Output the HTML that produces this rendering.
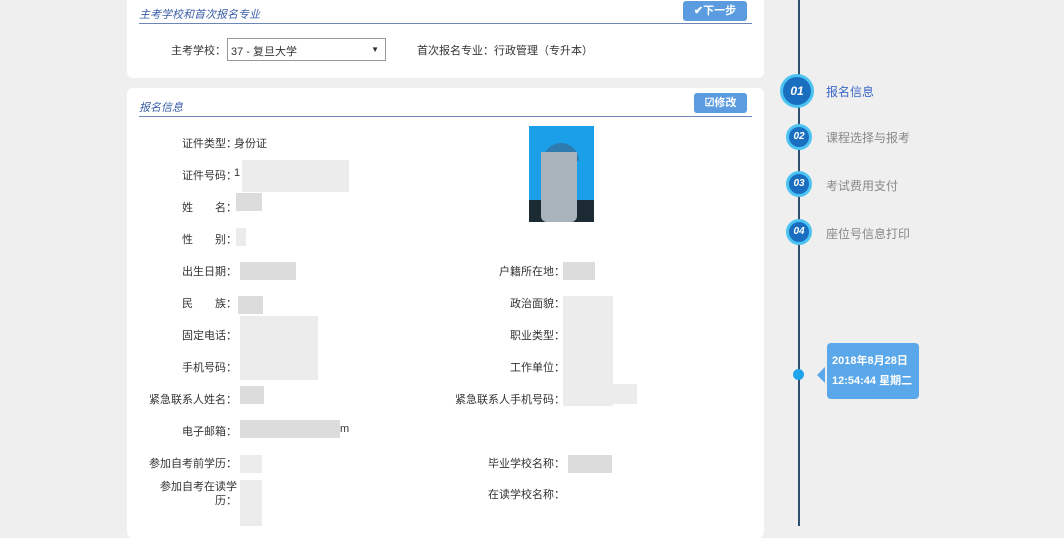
<!DOCTYPE html>
<html><head><meta charset="utf-8"><style>
*{margin:0;padding:0;box-sizing:border-box}
body{width:1064px;height:526px;overflow:hidden;background:#efefef;font-family:"Liberation Sans","Noto Sans CJK SC",sans-serif;font-size:11px;color:#333;position:relative}
.card{position:absolute;left:127px;width:637px;background:#fff;border-radius:6px}
.ttl{position:absolute;left:12px;font-size:11px;font-style:italic;color:#3a5ea8;letter-spacing:0}
.hr{position:absolute;left:12px;right:12px;height:2px;background:#6d86b8}
.btn{position:absolute;background:#5b9be0;color:#fff;font-size:11px;border-radius:3px;text-align:center;font-weight:bold}
.a{position:absolute;white-space:nowrap}
.l{position:absolute;text-align:right;white-space:nowrap}
.b{position:absolute;background:#dcdcdc}
.c{position:absolute;background:#ececec}
.step{position:absolute;left:786px;width:26px;height:26px;border-radius:50%;background:#1a6ec0;border:3px solid #4cc3f0;color:#fff;font-size:10px;font-style:italic;font-weight:bold;text-align:center;line-height:20px}
.st{position:absolute;left:826px;font-size:12px;color:#888}
.L1{left:137px;width:100px}
.L2{left:437px;width:128px}
</style></head><body>
<div class="card" style="top:-6px;height:84px">
 <div class="ttl" style="top:12px">主考学校和首次报名专业</div>
 <div class="btn" style="left:556px;top:7px;width:64px;height:20px;line-height:20px">✔下一步</div>
 <div class="hr" style="top:29px;height:1px"></div>
 <div class="a" style="left:44px;top:48px">主考学校：</div>
 <div class="a" style="left:100px;top:44px;width:159px;height:23px;border:1px solid #999;padding:4px 3px">37 - 复旦大学<span style="position:absolute;right:6px;font-size:8px;top:6px">▼</span></div>
 <div class="a" style="left:290px;top:48px">首次报名专业：行政管理（专升本）</div>
</div>
<div class="card" style="top:88px;height:450px">
 <div class="ttl" style="top:11px">报名信息</div>
 <div class="btn" style="left:567px;top:5px;width:53px;height:20px;line-height:20px">☑修改</div>
 <div class="hr" style="top:28px;height:1px"></div>
 <div style="position:absolute;left:402px;top:38px;width:65px;height:96px;background:#1a9fe8"></div>
 <div style="position:absolute;left:402px;top:112px;width:65px;height:22px;background:#1c2a33"></div>
 <div style="position:absolute;left:416px;top:55px;width:36px;height:18px;border-radius:18px 18px 0 0;background:#2e7bb0"></div>
 <div style="position:absolute;left:414px;top:64px;width:36px;height:70px;border-radius:0 0 6px 6px;background:#a9b3bc"></div>
</div>
<div class="l L1" style="top:135px">证件类型：</div><div class="a" style="left:234px;top:135px">身份证</div>
<div class="l L1" style="top:167px">证件号码：</div><div class="a" style="left:234px;top:167px">1</div><div class="c" style="left:242px;top:160px;width:107px;height:32px"></div>
<div class="l L1" style="top:199px">姓　　名：</div><div class="b" style="left:236px;top:193px;width:26px;height:18px"></div>
<div class="l L1" style="top:231px">性　　别：</div><div class="c" style="left:236px;top:228px;width:10px;height:18px"></div>
<div class="l L1" style="top:263px">出生日期：</div><div class="b" style="left:240px;top:262px;width:56px;height:18px"></div>
<div class="l L1" style="top:295px">民　　族：</div><div class="b" style="left:238px;top:296px;width:25px;height:18px"></div>
<div class="l L1" style="top:327px">固定电话：</div><div class="c" style="left:240px;top:316px;width:78px;height:64px"></div>
<div class="l L1" style="top:359px">手机号码：</div>
<div class="l L1" style="top:391px">紧急联系人姓名：</div><div class="b" style="left:240px;top:386px;width:24px;height:18px"></div>
<div class="l L1" style="top:423px">电子邮箱：</div><div class="b" style="left:240px;top:420px;width:100px;height:18px"></div><div class="a" style="left:340px;top:423px">m</div>
<div class="l L1" style="top:455px">参加自考前学历：</div><div class="c" style="left:240px;top:455px;width:22px;height:18px"></div>
<div class="l" style="left:127px;width:110px;top:480px;line-height:14px">参加自考在读学<br>历：</div><div class="c" style="left:240px;top:480px;width:22px;height:46px"></div>
<div class="l L2" style="top:263px">户籍所在地：</div><div class="b" style="left:563px;top:262px;width:32px;height:18px"></div>
<div class="l L2" style="top:295px">政治面貌：</div><div class="c" style="left:563px;top:296px;width:50px;height:110px"></div>
<div class="l L2" style="top:327px">职业类型：</div>
<div class="l L2" style="top:359px">工作单位：</div>
<div class="l L2" style="top:391px">紧急联系人手机号码：</div><div class="c" style="left:565px;top:384px;width:72px;height:20px"></div>
<div class="l L2" style="top:455px">毕业学校名称：</div><div class="b" style="left:568px;top:455px;width:44px;height:18px"></div>
<div class="l L2" style="top:486px">在读学校名称：</div>
<div style="position:absolute;left:798px;top:0;width:2px;height:526px;background:#2e4f70"></div>
<div class="step" style="left:780px;top:74px;width:34px;height:34px;line-height:28px;font-size:12px">01</div>
<div class="st" style="top:83px;color:#3a66c8">报名信息</div>
<div class="step" style="top:124px">02</div><div class="st" style="top:129px">课程选择与报考</div>
<div class="step" style="top:171px">03</div><div class="st" style="top:177px">考试费用支付</div>
<div class="step" style="top:219px">04</div><div class="st" style="top:225px">座位号信息打印</div>
<div style="position:absolute;left:793px;top:369px;width:11px;height:11px;border-radius:50%;background:#1fa5ea"></div>
<div style="position:absolute;left:817px;top:367px;width:0;height:0;border:8px solid transparent;border-right-color:#5aa8ea;border-left:0"></div>
<div style="position:absolute;left:827px;top:343px;width:92px;height:56px;background:#5aa8ea;border-radius:4px;color:#fff;font-weight:bold;font-size:11px;padding:8px 5px;line-height:20px">2018年8月28日<br>12:54:44 星期二</div>
</body></html>
